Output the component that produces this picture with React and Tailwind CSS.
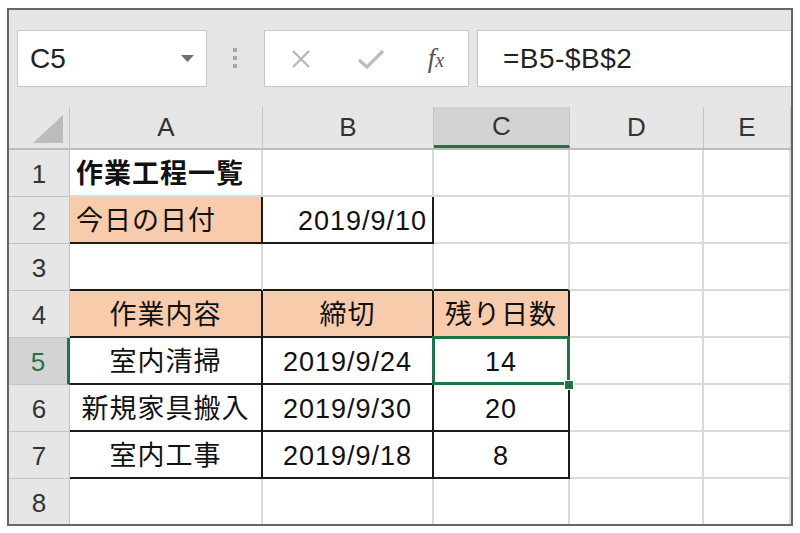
import React from 'react';

const cols = [
    { key: 'A', w: 'w-[193px]' },
    { key: 'B', w: 'w-[171px]' },
    { key: 'C', w: 'w-[136px]' },
    { key: 'D', w: 'w-[134px]' },
    { key: 'E', w: 'flex-1' },
];

const SALMON = 'bg-[#f8cbad]';

// cell settings per row: text, align, fill, rb (black right border), bb (black bottom border), bold
const rows = [
    { n: 1, cells: { A: { t: '作業工程一覧', align: 'left', bold: true } } },
    {
        n: 2,
        cells: {
            A: { t: '今日の日付', align: 'left', fill: SALMON, rb: true, bb: true },
            B: { t: '2019/9/10', align: 'right', rb: true, bb: true },
        },
    },
    { n: 3, cells: { A: { bb: true }, B: { bb: true }, C: { bb: true } } },
    {
        n: 4,
        cells: {
            A: { t: '作業内容', fill: SALMON, rb: true, bb: true },
            B: { t: '締切', fill: SALMON, rb: true, bb: true },
            C: { t: '残り日数', fill: SALMON, rb: true, bb: true },
        },
    },
    {
        n: 5,
        cells: {
            A: { t: '室内清掃', rb: true, bb: true },
            B: { t: '2019/9/24', rb: true, bb: true },
            C: { t: '14', rb: true, bb: true },
        },
    },
    {
        n: 6,
        cells: {
            A: { t: '新規家具搬入', rb: true, bb: true },
            B: { t: '2019/9/30', rb: true, bb: true },
            C: { t: '20', rb: true, bb: true },
        },
    },
    {
        n: 7,
        cells: {
            A: { t: '室内工事', rb: true, bb: true },
            B: { t: '2019/9/18', rb: true, bb: true },
            C: { t: '8', rb: true, bb: true },
        },
    },
    { n: 8, cells: {} },
];

const Cell = ({ col, cell }) => {
    const c = cell || {};
    const align =
        c.align === 'left' ? 'justify-start pl-[6px]' : c.align === 'right' ? 'justify-end pr-[5px]' : 'justify-center';
    return (
        <div
            className={`${col.w} shrink-0 h-full flex items-center pt-[3px] ${align} ${c.fill || 'bg-white'}
                ${c.rb ? 'border-r-2 border-r-[#1b1b1b]' : 'border-r-2 border-r-[#dadada]'}
                ${c.bb ? 'border-b-2 border-b-[#1b1b1b]' : 'border-b-2 border-b-[#dadada]'}
                ${c.bold ? 'font-bold' : ''} text-[27px] tracking-[1px] text-[#111] whitespace-nowrap`}
        >
            {c.t}
        </div>
    );
};

const App = () => {
    return (
        <div
            className="w-[800px] h-[533px] bg-white overflow-hidden pt-[8px] pl-[7px]"
            style={{ fontFamily: '"Liberation Sans", "Noto Sans CJK JP", sans-serif' }}
        >
            <div className="w-[786px] h-[518px] border-2 border-[#666] bg-[#e6e6e6] overflow-hidden flex flex-col">
                {/* formula bar */}
                <div className="h-[97px] shrink-0 flex items-start pt-[20px] pl-[8px]">
                    <div className="w-[190px] h-[57px] bg-white border border-[#c8c8c8] flex items-center justify-between pl-[12px] pr-[12px]">
                        <span className="text-[28px] text-[#222] leading-none">C5</span>
                        <svg width="13" height="7" viewBox="0 0 13 7">
                            <polygon points="0,0 13,0 6.5,7" fill="#6f6f6f" />
                        </svg>
                    </div>
                    <div className="w-[4px] ml-[26px] mt-[18px] flex flex-col gap-[4px]">
                        <div className="w-[4px] h-[4px] bg-[#a8a8a8]" />
                        <div className="w-[4px] h-[4px] bg-[#a8a8a8]" />
                        <div className="w-[4px] h-[4px] bg-[#a8a8a8]" />
                    </div>
                    <div className="w-[205px] h-[57px] ml-[27px] bg-white border border-[#c8c8c8] flex items-center">
                        <div className="w-[72px] flex justify-center">
                            <svg width="20" height="20" viewBox="0 0 20 20">
                                <path d="M2 2 L18 18 M18 2 L2 18" stroke="#b8b8b8" strokeWidth="2.4" fill="none" />
                            </svg>
                        </div>
                        <div className="w-[68px] flex justify-center">
                            <svg width="28" height="20" viewBox="0 0 28 20">
                                <path d="M2 11 L10 18 L26 2" stroke="#bcbcbc" strokeWidth="3.2" fill="none" />
                            </svg>
                        </div>
                        <div className="w-[62px] flex justify-center">
                            <span
                                className="text-[27px] italic text-[#555] leading-none"
                                style={{ fontFamily: '"Liberation Serif", serif' }}
                            >
                                f<span className="text-[20px]">x</span>
                            </span>
                        </div>
                    </div>
                    <div className="flex-1 h-[57px] ml-[8px] bg-white border border-[#c8c8c8] border-r-0 flex items-center pl-[25px]">
                        <span className="text-[28px] text-[#222] leading-none tracking-[0.5px]">=B5-$B$2</span>
                    </div>
                </div>

                {/* column headers */}
                <div className="h-[43px] shrink-0 flex border-b-2 border-[#bdbdbd]">
                    <div className="w-[61px] shrink-0 h-full border-r border-[#c4c4c4] flex items-end justify-end pr-[6px] pb-[5px]">
                        <svg width="30" height="28" viewBox="0 0 30 28">
                            <polygon points="30,0 30,28 0,28" fill="#bcbcbc" />
                        </svg>
                    </div>
                    {cols.map((c) => (
                        <div
                            key={c.key}
                            className={`${c.w} shrink-0 h-full flex items-center justify-center text-[26px] text-[#333] border-r border-[#c4c4c4]
                                ${c.key === 'C' ? 'bg-[#d3d3d3] border-b-[3px] border-b-[#217346]' : ''}`}
                        >
                            {c.key}
                        </div>
                    ))}
                </div>

                {/* rows */}
                {rows.map((r) => (
                    <div key={r.n} className={`h-[47px] shrink-0 flex ${r.n === 5 ? 'relative z-10' : ''}`}>
                        <div
                            className={`w-[61px] shrink-0 h-full flex items-center justify-center pt-[2px] text-[26px] border-b border-[#c4c4c4]
                                ${r.n === 5 ? 'bg-[#d3d3d3] text-[#217346] border-r-[3px] border-r-[#217346]' : 'text-[#333] border-r border-r-[#c4c4c4]'}`}
                        >
                            {r.n}
                        </div>
                        <div className="flex-1 h-full flex relative">
                            {cols.map((c) => (
                                <Cell key={c.key} col={c} cell={r.cells[c.key]} />
                            ))}
                            {r.n === 5 && (
                                <>
                                    {/* active cell outline + fill handle */}
                                    <div className="absolute left-[362px] top-[-2px] w-[138px] h-[49px] border-[3px] border-[#217346] pointer-events-none" />
                                    <div className="absolute left-[494px] top-[42px] w-[10px] h-[10px] bg-[#217346] border border-white" />
                                </>
                            )}
                        </div>
                    </div>
                ))}
            </div>
        </div>
    );
};

export default App;
